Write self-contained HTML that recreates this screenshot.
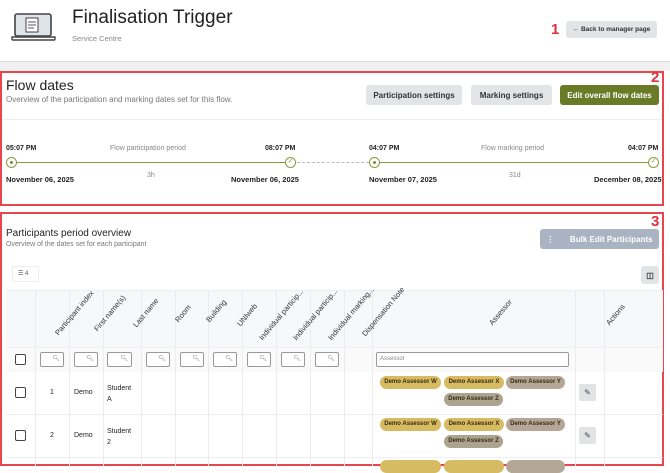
<!DOCTYPE html>
<html><head><meta charset="utf-8"><style>
*{box-sizing:border-box;margin:0;padding:0}
body{width:670px;height:467px;overflow:hidden;background:#fff;font-family:"Liberation Sans",sans-serif;color:#222;position:relative}
.a{position:absolute;white-space:nowrap}
.btn{position:absolute;border-radius:3px;font-size:8px;font-weight:bold;display:flex;align-items:center;justify-content:center;color:#333;background:#e3e4e6}
.red{position:absolute;border:2px solid #e8454f}
.num{position:absolute;color:#e0303c;font-size:15px;font-weight:bold}
.sm{font-size:7px;font-weight:bold;color:#222}
.gray{font-size:7px;color:#888}
.circ{position:absolute;width:11px;height:11px;border-radius:50%;border:1.5px solid #8a9a3e;background:#fff}
.dot{position:absolute;left:2.5px;top:2.5px;width:3px;height:3px;border-radius:50%;background:#7a8a30}
.vl{position:absolute;top:290px;height:177px;border-left:1px solid #ececec}
.hd{position:absolute;font-size:7.5px;color:#333;transform:rotate(-50deg);transform-origin:left bottom;white-space:nowrap;line-height:9px}
.f{position:absolute;top:352px;height:15px;border:1px solid #999;border-radius:2px;background:#fff;font-size:6px;color:#888;text-align:right;padding-right:3px;line-height:13px}
.cb{position:absolute;left:15px;width:11px;height:11px;border:1.3px solid #444;border-radius:2px;background:#fff}
.pill{position:absolute;height:13px;border-radius:7px;font-size:6px;line-height:13px;text-align:center;color:#3a2a10;font-weight:bold;overflow:hidden}
.pw{background:#d6bb62}.py{background:#b5a797}.pz{background:#aca48f}
.ed{position:absolute;left:579px;width:17px;height:17px;background:#e2e3e5;border-radius:2px;font-size:8px;color:#444;text-align:center;line-height:17px}
</style></head><body>
<svg class="a" style="left:11px;top:12px" width="45" height="30" viewBox="0 0 45 30"><rect x="4" y="2" width="36" height="22" rx="2" fill="#dfe4ea" stroke="#444" stroke-width="1.6"/><rect x="15" y="6" width="12" height="14" fill="#fff" stroke="#444" stroke-width="1"/><line x1="17" y1="10" x2="25" y2="10" stroke="#555"/><line x1="17" y1="13" x2="25" y2="13" stroke="#555"/><line x1="17" y1="16" x2="23" y2="16" stroke="#555"/><path d="M1 25 H44 V27 Q44 28 43 28 H2 Q1 28 1 27Z" fill="#fff" stroke="#444" stroke-width="1.4"/></svg>
<div class="a" style="left:72px;top:7px;font-size:19px;color:#222">Finalisation Trigger</div>
<div class="a" style="left:72px;top:34px;font-size:7.5px;color:#888">Service Centre</div>
<div class="num" style="left:551px;top:21px">1</div>
<div class="btn" style="left:566px;top:21px;width:91px;height:17px;font-size:6.5px">← Back to manager page</div>
<div class="a" style="left:0;top:61px;width:670px;height:10px;background:#f1f1f1;border-top:1px solid #ddd"></div>

<div class="red" style="left:0;top:71px;width:664px;height:135px"></div>
<div class="num" style="left:651px;top:69px">2</div>
<div class="a" style="left:6px;top:77px;font-size:14px;color:#222">Flow dates</div>
<div class="a" style="left:6px;top:95px;font-size:8px;color:#777">Overview of the participation and marking dates set for this flow.</div>
<div class="btn" style="left:366px;top:85px;width:96px;height:20px">Participation settings</div>
<div class="btn" style="left:471px;top:85px;width:81px;height:20px">Marking settings</div>
<div class="btn" style="left:560px;top:85px;width:99px;height:20px;background:#6b7a26;color:#fff">Edit overall flow dates</div>
<div class="a" style="left:2px;top:119px;width:660px;border-top:1px solid #eee"></div>
<div class="a sm" style="left:6px;top:145px">05:07 PM</div>
<div class="a gray" style="left:110px;top:145px">Flow participation period</div>
<div class="a sm" style="left:265px;top:145px">08:07 PM</div>
<div class="a sm" style="left:369px;top:145px">04:07 PM</div>
<div class="a gray" style="left:481px;top:145px">Flow marking period</div>
<div class="a sm" style="left:628px;top:145px">04:07 PM</div>
<div class="a" style="left:12px;top:162px;width:280px;border-top:1.5px solid #8a9a3e"></div>
<div class="a" style="left:292px;top:162px;width:82px;border-top:1px dashed #bbb"></div>
<div class="a" style="left:374px;top:162px;width:280px;border-top:1.5px solid #8a9a3e"></div>
<div class="circ" style="left:6px;top:157px"><div class="dot"></div></div>
<div class="circ" style="left:285px;top:157px;font-size:7px;color:#8a9a3e;line-height:8px;text-align:center">✓</div>
<div class="circ" style="left:369px;top:157px"><div class="dot"></div></div>
<div class="circ" style="left:648px;top:157px;font-size:7px;color:#8a9a3e;line-height:8px;text-align:center">✓</div>
<div class="a sm" style="left:6px;top:175px;font-size:7.5px">November 06, 2025</div>
<div class="a gray" style="left:147px;top:172px">3h</div>
<div class="a sm" style="left:231px;top:175px;font-size:7.5px">November 06, 2025</div>
<div class="a sm" style="left:369px;top:175px;font-size:7.5px">November 07, 2025</div>
<div class="a gray" style="left:509px;top:172px">31d</div>
<div class="a sm" style="left:594px;top:175px;font-size:7.5px">December 08, 2025</div>

<div class="red" style="left:0;top:212px;width:664px;height:254px"></div>
<div class="num" style="left:651px;top:213px">3</div>
<div class="a" style="left:6px;top:228px;font-size:10px;color:#222">Participants period overview</div>
<div class="a" style="left:6px;top:241px;font-size:7px;color:#777">Overview of the dates set for each participant</div>
<div class="btn" style="left:540px;top:229px;width:119px;height:20px;background:#a9b3c1;color:#fff">⋮ &nbsp;&nbsp;&nbsp;&nbsp;&nbsp;&nbsp;Bulk Edit Participants</div>
<div class="a" style="left:12px;top:266px;width:27px;height:16px;border:1px solid #eee;border-radius:2px;font-size:6px;color:#555;padding:3px 0 0 5px">☰ 4</div>
<div class="btn" style="left:641px;top:266px;width:18px;height:18px;font-size:8px">◫</div>
<div class="a" style="left:6px;top:290px;width:657px;height:57px;background:#f7f8f9;border-top:1px solid #eee"></div>
<div class="a" style="left:6px;top:347px;width:657px;height:25px;background:#fafafa;border-top:1px solid #eee"></div>
<div class="a" style="left:6px;top:414px;width:657px;border-top:1px solid #eee"></div>
<div class="a" style="left:6px;top:457px;width:657px;border-top:1px solid #eee"></div>
<div class="vl" style="left:35px"></div><div class="vl" style="left:69px"></div><div class="vl" style="left:103px"></div><div class="vl" style="left:141px"></div><div class="vl" style="left:175px"></div><div class="vl" style="left:208px"></div><div class="vl" style="left:242px"></div><div class="vl" style="left:276px"></div><div class="vl" style="left:310px"></div><div class="vl" style="left:344px"></div><div class="vl" style="left:372px"></div><div class="vl" style="left:575px"></div><div class="vl" style="left:604px"></div>
<div class="hd" style="left:60px;top:328px">Participant index</div>
<div class="hd" style="left:99px;top:324px">First name(s)</div>
<div class="hd" style="left:138px;top:320px">Last name</div>
<div class="hd" style="left:180px;top:315px">Room</div>
<div class="hd" style="left:211px;top:315px">Building</div>
<div class="hd" style="left:242px;top:319px">UNIweb</div>
<div class="hd" style="left:264px;top:333px">Individual particip...</div>
<div class="hd" style="left:298px;top:333px">Individual particip...</div>
<div class="hd" style="left:333px;top:333px">Individual marking...</div>
<div class="hd" style="left:367px;top:329px">Dispensation Note</div>
<div class="hd" style="left:494px;top:318px">Assessor</div>
<div class="hd" style="left:611px;top:318px">Actions</div>
<div class="cb" style="top:354px"></div>
<div class="f" style="left:40px;width:24px">🔍︎</div><div class="f" style="left:74px;width:24px">🔍︎</div><div class="f" style="left:107px;width:25px">🔍︎</div><div class="f" style="left:146px;width:24px">🔍︎</div><div class="f" style="left:180px;width:24px">🔍︎</div><div class="f" style="left:213px;width:24px">🔍︎</div><div class="f" style="left:247px;width:24px">🔍︎</div><div class="f" style="left:281px;width:24px">🔍︎</div><div class="f" style="left:315px;width:24px">🔍︎</div>
<div class="f" style="left:376px;width:193px;text-align:left;padding-left:3px">Assessor</div>
<div class="cb" style="top:387px"></div>
<div class="a" style="left:50px;top:389px;font-size:7px">1</div>
<div class="a" style="left:74px;top:389px;font-size:7px">Demo</div>
<div class="a" style="left:107px;top:383px;font-size:7px;line-height:11px">Student<br>A</div>
<div class="pill pw" style="left:380px;top:376px;width:61px">Demo Assessor W</div>
<div class="pill pw" style="left:444px;top:376px;width:60px">Demo Assessor X</div>
<div class="pill py" style="left:506px;top:376px;width:59px">Demo Assessor Y</div>
<div class="pill pz" style="left:444px;top:393px;width:59px">Demo Assessor Z</div>
<div class="ed" style="top:384px">✎</div>
<div class="cb" style="top:430px"></div>
<div class="a" style="left:50px;top:432px;font-size:7px">2</div>
<div class="a" style="left:74px;top:432px;font-size:7px">Demo</div>
<div class="a" style="left:107px;top:426px;font-size:7px;line-height:11px">Student<br>2</div>
<div class="pill pw" style="left:380px;top:418px;width:61px">Demo Assessor W</div>
<div class="pill pw" style="left:444px;top:418px;width:60px">Demo Assessor X</div>
<div class="pill py" style="left:506px;top:418px;width:59px">Demo Assessor Y</div>
<div class="pill pz" style="left:444px;top:435px;width:59px">Demo Assessor Z</div>
<div class="ed" style="top:427px">✎</div>
<div class="pill pw" style="left:380px;top:460px;width:61px"></div>
<div class="pill pw" style="left:444px;top:460px;width:60px"></div>
<div class="pill py" style="left:506px;top:460px;width:59px"></div>
</body></html>
